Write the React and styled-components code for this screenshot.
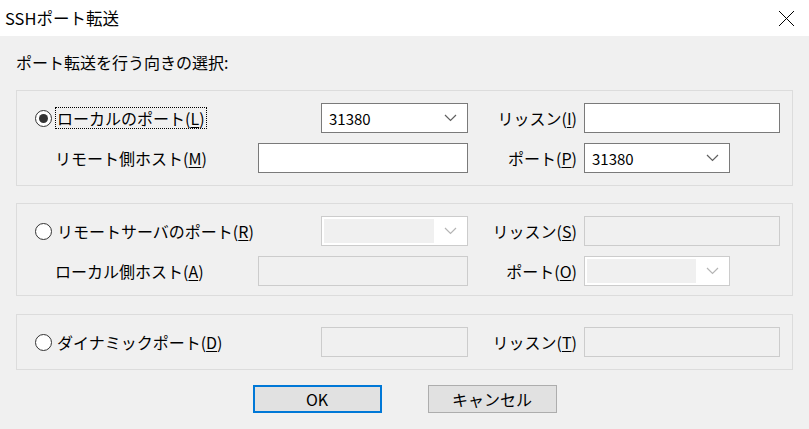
import styled, { createGlobalStyle } from "styled-components";

const GlobalStyle = createGlobalStyle`
  html, body {
    margin: 0;
    padding: 0;
    background: #f0f0f0;
  }
  body {
    font-family: "Noto Sans CJK JP", "Noto Sans", sans-serif;
    color: #000;
  }
`;

const Dialog = styled.div`
  width: 809px;
  height: 429px;
  display: flex;
  flex-direction: column;
  background: #f0f0f0;
  overflow: hidden;
`;

const TitleBar = styled.div`
  height: 36px;
  flex: none;
  background: #fff;
  display: flex;
  align-items: center;
  justify-content: space-between;
  padding: 0 14px 0 5px;
  font-size: 16.5px;
`;

const Body = styled.div`
  padding: 14px 16px 0 16px;
  display: flex;
  flex-direction: column;
`;

const Heading = styled.div`
  font-size: 16px;
  line-height: 24px;
  margin-bottom: 16px;
`;

const Group = styled.div`
  border: 1px solid #dcdcdc;
  padding: 12px 0 ${(p) => p.$bottom || 12}px 18px;
  display: flex;
  flex-direction: column;
  gap: 10px;
  margin-bottom: ${(p) => p.$gap || 0}px;
`;

const Row = styled.div`
  display: flex;
  align-items: center;
  height: 30px;
`;

const Left = styled.div`
  width: 433px;
  display: flex;
  align-items: center;
  justify-content: space-between;
`;

const RightLabel = styled.div`
  width: 109px;
  text-align: right;
  font-size: 16px;
  margin-right: 7px;
  white-space: nowrap;
`;

const RadioWrap = styled.label`
  display: flex;
  align-items: center;
  font-size: 16px;
  white-space: nowrap;
`;

const RadioCircle = styled.span`
  box-sizing: border-box;
  width: 17px;
  height: 17px;
  border-radius: 50%;
  border: 1px solid #333;
  background: #fff;
  display: flex;
  align-items: center;
  justify-content: center;
  margin-right: 4px;

  &::after {
    content: "";
    width: 9px;
    height: 9px;
    border-radius: 50%;
    background: ${(p) => (p.$checked ? "#333" : "transparent")};
  }
`;

const RadioText = styled.span`
  outline: ${(p) => (p.$focus ? "1px dotted #000" : "none")};
  outline-offset: 0;
  padding: 0 1px;
  line-height: 20px;
`;

const SubLabel = styled.span`
  font-size: 16px;
  padding-left: 20px;
  white-space: nowrap;
`;

const Key = styled.u`
  text-underline-offset: 2px;
`;

const TextBox = styled.div`
  box-sizing: border-box;
  width: ${(p) => p.$w}px;
  height: 30px;
  border: 1px solid ${(p) => (p.$disabled ? "#cccccc" : "#7a7a7a")};
  background: ${(p) => (p.$disabled ? "#f0f0f0" : "#fff")};
`;

const Combo = styled.div`
  box-sizing: border-box;
  width: ${(p) => p.$w}px;
  height: 30px;
  border: 1px solid ${(p) => (p.$disabled ? "#cccccc" : "#7a7a7a")};
  background: #fff;
  display: flex;
  align-items: center;
  padding: 2px 10px 2px 2px;
`;

const ComboValue = styled.div`
  flex: 1;
  align-self: stretch;
  display: flex;
  align-items: center;
  padding-left: 5px;
  margin-right: 10px;
  font-size: 15px;
  background: ${(p) => (p.$disabled ? "#f0f0f0" : "transparent")};
`;

const Buttons = styled.div`
  display: flex;
  justify-content: center;
  gap: 46px;
  margin-top: 15px;
`;

const Button = styled.div`
  box-sizing: border-box;
  width: 129px;
  height: 28px;
  background: #e1e1e1;
  border: ${(p) => (p.$default ? "2px solid #0078d7" : "1px solid #adadad")};
  display: flex;
  align-items: center;
  justify-content: center;
  font-size: 16px;
`;

const Chevron = ({ disabled }) => (
  <svg width="13" height="8" viewBox="0 0 13 8">
    <polyline
      points="1,1 6.5,6.5 12,1"
      fill="none"
      stroke={disabled ? "#b5b5b5" : "#606060"}
      strokeWidth="1.2"
    />
  </svg>
);

const ComboBox = ({ w, value, disabled }) => (
  <Combo $w={w} $disabled={disabled}>
    <ComboValue $disabled={disabled}>{value}</ComboValue>
    <Chevron disabled={disabled} />
  </Combo>
);

const Radio = ({ checked, focus, children }) => (
  <RadioWrap>
    <RadioCircle $checked={checked} />
    <RadioText $focus={focus}>{children}</RadioText>
  </RadioWrap>
);

export default function App() {
  return (
    <>
      <GlobalStyle />
      <Dialog>
        <TitleBar>
          <span>SSHポート転送</span>
          <svg width="17" height="17" viewBox="0 0 17 17">
            <path d="M1 1L16 16M16 1L1 16" stroke="#000" strokeWidth="1" />
          </svg>
        </TitleBar>
        <Body>
          <Heading>ポート転送を行う向きの選択:</Heading>

          <Group $gap={17}>
            <Row>
              <Left>
                <Radio checked focus>
                  ローカルのポート(<Key>L</Key>)
                </Radio>
                <ComboBox w={147} value="31380" />
              </Left>
              <RightLabel>
                リッスン(<Key>I</Key>)
              </RightLabel>
              <TextBox $w={196} />
            </Row>
            <Row>
              <Left>
                <SubLabel>
                  リモート側ホスト(<Key>M</Key>)
                </SubLabel>
                <TextBox $w={210} />
              </Left>
              <RightLabel>
                ポート(<Key>P</Key>)
              </RightLabel>
              <ComboBox w={146} value="31380" />
            </Row>
          </Group>

          <Group $gap={18} $bottom={9}>
            <Row>
              <Left>
                <Radio>
                  リモートサーバのポート(<Key>R</Key>)
                </Radio>
                <ComboBox w={147} disabled />
              </Left>
              <RightLabel>
                リッスン(<Key>S</Key>)
              </RightLabel>
              <TextBox $w={196} $disabled />
            </Row>
            <Row>
              <Left>
                <SubLabel>
                  ローカル側ホスト(<Key>A</Key>)
                </SubLabel>
                <TextBox $w={210} $disabled />
              </Left>
              <RightLabel>
                ポート(<Key>O</Key>)
              </RightLabel>
              <ComboBox w={146} disabled />
            </Row>
          </Group>

          <Group>
            <Row>
              <Left>
                <Radio>
                  ダイナミックポート(<Key>D</Key>)
                </Radio>
                <TextBox $w={147} $disabled />
              </Left>
              <RightLabel>
                リッスン(<Key>T</Key>)
              </RightLabel>
              <TextBox $w={196} $disabled />
            </Row>
          </Group>

          <Buttons>
            <Button $default>OK</Button>
            <Button>キャンセル</Button>
          </Buttons>
        </Body>
      </Dialog>
    </>
  );
}
